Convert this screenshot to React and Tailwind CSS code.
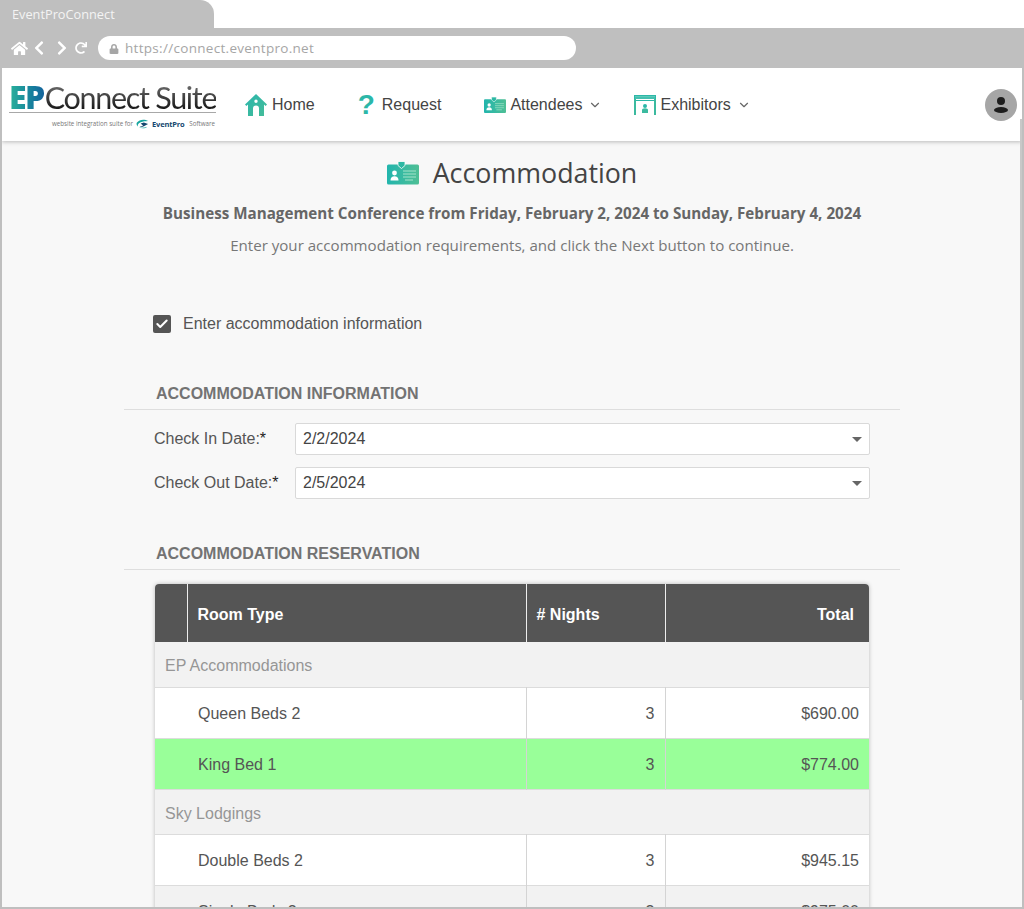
import { Check, ChevronDown } from 'lucide-react';
import { FaChevronLeft, FaChevronRight, FaHome, FaLock, FaRedo } from 'react-icons/fa';

const rowClass = 'h-[51px] border-b border-[#dcdcdc]';
const cellClass = 'border-r border-[#d4d4d4] px-[10px] pt-[3px] text-right';

function IdBadge({ className }) {
  return (
    <svg viewBox="0 0 32 23" className={className}>
      <defs>
        <linearGradient id="badge" x1="0" x2="1" y1="0" y2="0">
          <stop offset="0" stopColor="#22b5ad" />
          <stop offset="1" stopColor="#4fbf95" />
        </linearGradient>
      </defs>
      <rect x="0" y="3" width="32" height="20" rx="1.5" fill="url(#badge)" />
      <path d="M11 0h7v4l-3.5 3L11 4z" fill="#2cb8a3" stroke="#fff" strokeWidth="0.8" />
      <circle cx="7.5" cy="11.5" r="2.4" fill="#fff" />
      <path d="M3.5 19c0-3 1.6-4.2 4-4.2s4 1.2 4 4.2z" fill="#fff" />
      <path d="M16 9.5h13M16 12.5h13M16 15.5h13M18 18.5h8" stroke="#a5e3cb" strokeWidth="1" />
    </svg>
  );
}

function HomeIcon() {
  return (
    <svg viewBox="0 0 22 22" className="h-[22px] w-[22px]">
      <defs>
        <linearGradient id="house" x1="0" x2="1" y1="0" y2="1">
          <stop offset="0" stopColor="#2bb6ad" />
          <stop offset="1" stopColor="#45bc98" />
        </linearGradient>
      </defs>
      <path
        fillRule="evenodd"
        d="M11 0 22 10.5 20.6 12 19 10.5V22H3V10.500L1.400 12 0 10.500zM11 5.500a1.700 1.700 0 1 0 0 3.400 1.700 1.700 0 0 0 0-3.400zM8 22h6v-7.500a3 3 0 0 0-6 0z"
        fill="url(#house)"
      />
    </svg>
  );
}

function BoothIcon() {
  return (
    <svg viewBox="0 0 22 20" className="h-5 w-[22px]">
      <path d="M0 0h22v4H0z" fill="#2cb7a8" />
      <path d="M1 1.500h20M1 3h20" stroke="#8fdcc8" strokeWidth="0.5" />
      <path d="M0 4h2v16H0zM20 4h2v16h-2z" fill="#3bba9f" />
      <path d="M2 5.500h18" stroke="#2cb7a8" strokeWidth="1" />
      <circle cx="11" cy="11" r="2" fill="#2cb7a8" />
      <path d="M8 18v-3c0-1 1-1.700 3-1.700s3 .7 3 1.700v3z" fill="#3bba9f" />
    </svg>
  );
}

function EventProMark() {
  return (
    <svg viewBox="0 0 14 10" className="h-[10px] w-[13px]">
      <path d="M13 1.800C9.500-.5 3.500-.2 1 3.500.200 5 .500 6.500 2 8c-.5-2 .5-3.800 3-4.800 2.500-1 5.500-1.200 8-1.400z" fill="#17a6a0" />
      <path d="M5 4.500 8.500 3.500 13 5 8.500 7.500c-1.500.8-3 1-4.500.5 1.500-.3 2.800-.8 3.600-1.500z" fill="#14476e" />
      <path d="M3 8.500c3 1.700 7 1.500 9-.5-3 1-6 1.200-9 .5z" fill="#17a6a0" />
    </svg>
  );
}

function NavItem({ icon, label, caret, className }) {
  return (
    <a className={`flex items-center text-[16px] text-[#444] ${className}`}>
      {icon}
      <span>{label}</span>
      {caret && <ChevronDown size={14} strokeWidth={2} className="ml-[6px] text-[#666]" />}
    </a>
  );
}

function DateField({ label, value }) {
  return (
    <div className="flex items-center">
      <label className="w-[141px] text-[16px] text-[#555]">
        {label}
        <span className="text-[#222]">*</span>
      </label>
      <div className="flex h-[32px] w-[575px] items-center justify-between rounded-[2px] border border-[#d9d9d9] bg-white px-[7px] text-[16px] text-[#444]">
        <span>{value}</span>
        <span className="h-0 w-0 border-x-[5px] border-t-[5px] border-x-transparent border-t-[#666]" />
      </div>
    </div>
  );
}

function SectionTitle({ children }) {
  return (
    <div className="border-b border-[#dedede] pb-[5px] pl-[32px] text-[16px] leading-[20px] font-bold text-[#737373]">
      {children}
    </div>
  );
}

function GroupRow({ name }) {
  return (
    <tr className="h-[45px] border-b border-[#dcdcdc] bg-[#f2f2f2]">
      <td colSpan={4} className="px-[10px] pt-[4px] text-[#969696]">
        {name}
      </td>
    </tr>
  );
}

function RoomRow({ name, nights, total, bg }) {
  return (
    <tr className={`${rowClass} ${bg}`}>
      <td />
      <td className="border-r border-[#d4d4d4] pt-[3px] pr-[10px] pl-[11px]">{name}</td>
      <td className={cellClass}>{nights}</td>
      <td className="px-[10px] pt-[3px] text-right">{total}</td>
    </tr>
  );
}

export default function App() {
  return (
    <div className="flex h-[909px] flex-col overflow-hidden bg-white font-['Liberation_Sans',Arial,sans-serif]">
      {/* browser tab */}
      <div className="flex h-[28px] w-[214px] items-center rounded-tr-[14px] bg-[#bfbfbf] pt-[1px] pl-[12px] font-['Open_Sans',sans-serif] text-[12.75px] text-[#f4f4f4]">
        EventProConnect
      </div>

      {/* address bar */}
      <div className="flex h-[40px] items-center bg-[#bfbfbf] pl-[11px] text-white">
        <FaHome size={17} />
        <FaChevronLeft size={16} className="ml-[3px]" />
        <FaChevronRight size={16} className="ml-[7px]" />
        <FaRedo size={12} className="ml-[5px]" />
        <div className="ml-[11px] flex h-[24px] w-[478px] items-center rounded-full bg-white pt-[1px] pl-[11px] font-['Open_Sans',sans-serif] text-[13.5px] tracking-[0.3px] text-[#a6a6a6]">
          <FaLock size={10} className="mr-[6px]" />
          https://connect.eventpro.net
        </div>
      </div>

      {/* page */}
      <div className="relative flex min-h-0 flex-1 flex-col overflow-hidden border-x-2 border-b-2 border-[#bfbfbf] bg-[#f8f8f8]">
        <div className="absolute top-[51px] right-0 h-[581px] w-[2px] bg-[#c8c8c8]" />

        <header className="flex h-[73px] shrink-0 items-center bg-white pr-[5px] pl-[7px] shadow-[0_1px_4px_rgba(0,0,0,0.25)]">
          <div className="w-[207px] shrink-0">
            <div className="flex items-baseline border-b border-[#a8a8a8] leading-[30px] whitespace-nowrap">
              <span className="bg-gradient-to-r from-[#2bb39a] to-[#14639c] bg-clip-text font-['Open_Sans',sans-serif] text-[32px] font-extrabold tracking-[-1.5px] text-transparent">
                EP
              </span>
              <span className="ml-[1px] bg-gradient-to-b from-[#777] to-[#111] bg-clip-text font-['Lato',sans-serif] text-[30.500px] tracking-[-1.3px] text-transparent">
                Connect Suite
              </span>
            </div>
            <div className="mt-[6px] -mb-[1px] flex items-center justify-end pr-[1px] font-['Open_Sans',sans-serif] text-[6.200px] leading-[10px] text-[#777]">
              website integration suite for
              <span className="mx-[3px]">
                <EventProMark />
              </span>
              <span className="mr-[5px] text-[7.500px] font-bold tracking-[-0.2px] text-[#14476e]">EventPro</span>
              Software
            </div>
          </div>

          <NavItem className="ml-[29px]" icon={<span className="mr-[5px]"><HomeIcon /></span>} label="Home" />
          <NavItem
            className="ml-[43px]"
            icon={<span className="mr-[7px] text-[28px] leading-[28px] font-bold text-[#2cb7a8]">?</span>}
            label="Request"
          />
          <NavItem className="ml-[43px]" icon={<IdBadge className="mr-[4px] h-[16px] w-[22px]" />} label="Attendees" caret />
          <NavItem className="ml-[32px]" icon={<span className="mr-[4px]"><BoothIcon /></span>} label="Exhibitors" caret />

          <div className="ml-auto flex h-[32px] w-[32px] flex-col items-center justify-center rounded-full bg-[#a6a6a6]">
            <span className="h-[8px] w-[8px] rounded-full bg-[#1d1d1d]" />
            <span className="mt-[2px] h-[6px] w-[14px] rounded-[50%] bg-[#1d1d1d]" />
          </div>
        </header>

        <main className="mx-auto w-[776px] shrink-0">
          <div className="mt-[15px] flex h-[34px] items-center justify-center">
            <IdBadge className="mr-[14px] h-[24px] w-[32px]" />
            <h1 className="font-['Open_Sans',sans-serif] text-[26.8px] leading-[34px] text-[#444]">Accommodation</h1>
          </div>
          <p className="mt-[13px] text-center font-['Open_Sans',sans-serif] text-[15.2px] leading-[20px] font-bold text-[#666]">
            Business Management Conference from Friday, February 2, 2024 to Sunday, February 4, 2024
          </p>
          <p className="mt-[12px] text-center font-['Open_Sans',sans-serif] text-[15.1px] leading-[20px] text-[#777]">
            Enter your accommodation requirements, and click the Next button to continue.
          </p>

          <div className="mt-[60px] flex h-[18px] items-center pl-[29px] text-[16px] text-[#555]">
            <span className="mr-[12px] flex h-[18px] w-[18px] items-center justify-center rounded-[2px] bg-[#555]">
              <Check size={14} strokeWidth={3.5} className="text-white" />
            </span>
            Enter accommodation information
          </div>

          <div className="mt-[51px]">
            <SectionTitle>ACCOMMODATION INFORMATION</SectionTitle>
          </div>
          <div className="mt-[13px] flex flex-col gap-[12px] pl-[30px]">
            <DateField label="Check In Date:" value="2/2/2024" />
            <DateField label="Check Out Date:" value="2/5/2024" />
          </div>

          <div className="mt-[45px]">
            <SectionTitle>ACCOMMODATION RESERVATION</SectionTitle>
          </div>

          <div className="mt-[14px] ml-[31px] w-[714px] overflow-hidden rounded-t-[4px] shadow-[0_0_4px_rgba(0,0,0,0.25)]">
            <table className="w-full table-fixed border-collapse bg-white text-[16px] text-[#555]">
              <colgroup>
                <col className="w-[32px]" />
                <col className="w-[339px]" />
                <col className="w-[139px]" />
                <col />
              </colgroup>
              <thead>
                <tr className="h-[58px] bg-[#555] font-bold text-white">
                  <th className="border-r border-[#eee]" />
                  <th className="border-r border-[#eee] px-[10px] pt-[4px] text-left">Room Type</th>
                  <th className="border-r border-[#eee] px-[10px] pt-[4px] text-left"># Nights</th>
                  <th className="px-[15px] pt-[4px] text-right">Total</th>
                </tr>
              </thead>
              <tbody>
                <GroupRow name="EP Accommodations" />
                <RoomRow name="Queen Beds 2" nights="3" total="$690.00" bg="bg-white" />
                <RoomRow name="King Bed 1" nights="3" total="$774.00" bg="bg-[#99ff99]" />
                <GroupRow name="Sky Lodgings" />
                <RoomRow name="Double Beds 2" nights="3" total="$945.15" bg="bg-white" />
                <RoomRow name="Single Beds 2" nights="3" total="$975.00" bg="bg-[#f2f2f2]" />
              </tbody>
            </table>
          </div>
        </main>
      </div>
    </div>
  );
}
